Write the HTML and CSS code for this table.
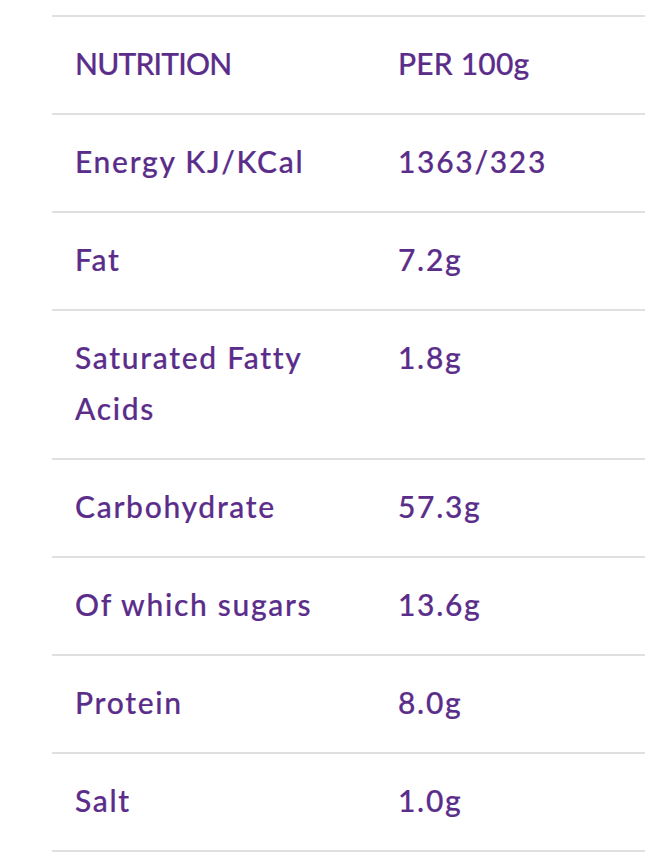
FILE: index.html
```html
<!DOCTYPE html>
<html>
<head>
<meta charset="utf-8">
<link rel="stylesheet" href="styles.css">
</head>
<body>
<div class="wrap">
<table class="nutri">
<tr><td class="k caps">NUTRITION</td><td class="v caps">PER 100g</td></tr>
<tr><td class="k">Energy KJ/KCal</td><td class="v">1363/323</td></tr>
<tr><td class="k">Fat</td><td class="v">7.2g</td></tr>
<tr><td class="k">Saturated Fatty Acids</td><td class="v">1.8g</td></tr>
<tr><td class="k">Carbohydrate</td><td class="v">57.3g</td></tr>
<tr><td class="k">Of which sugars</td><td class="v">13.6g</td></tr>
<tr><td class="k">Protein</td><td class="v">8.0g</td></tr>
<tr><td class="k">Salt</td><td class="v">1.0g</td></tr>
</table>
</div>
</body>
</html>
```
FILE: styles.css
```css
html, body { margin: 0; padding: 0; background: #fff; }
.wrap { padding: 15px 0 0 52px; overflow: hidden; }
.nutri {
  border-collapse: collapse;
  width: 620px;
  font-family: Lato, "Open Sans", sans-serif;
  font-size: 30px;
  line-height: 51px;
  color: #5b2d8a;
  letter-spacing: 1.7px;
  font-weight: 500;
  -webkit-text-stroke: 0.2px #5b2d8a;
}
.nutri td {
  border-top: 2px solid #e0e0e0;
  border-bottom: 2px solid #e0e0e0;
  padding: 21px 23px 24px;
  vertical-align: top;
  text-align: left;
}
.nutri td.k { width: 277px; }
.nutri td.v.caps { letter-spacing: 0.2px; }
.nutri td.k.caps { letter-spacing: -0.8px; }
```
